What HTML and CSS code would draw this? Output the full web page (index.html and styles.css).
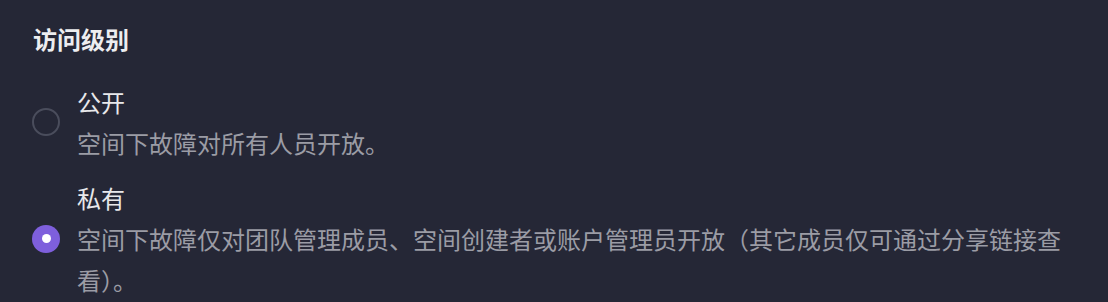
FILE: index.html
```html
<html>
    <head>
        <meta charset="utf-8">
        <link rel="stylesheet" href="styles.css">
    </head>
    <body>
        <div class="panel">
            <div class="title">访问级别</div>
            <div class="options">
                <label class="option">
                    <span class="radio"></span>
                    <span class="text">
                        <span class="label">公开</span>
                        <span class="desc">空间下故障对所有人员开放。</span>
                    </span>
                </label>
                <label class="option">
                    <span class="radio checked"></span>
                    <span class="text">
                        <span class="label">私有</span>
                        <span class="desc">空间下故障仅对团队管理成员、空间创建者或账户管理员开放（其它成员仅可通过分享链接查看）。</span>
                    </span>
                </label>
            </div>
        </div>
    </body>
</html>
```

FILE: styles.css
```css
body {
    margin: 0;
    background-color: rgb(37,39,54);
    font-family: "Noto Sans CJK SC", "Noto Sans", sans-serif;
}
.panel {
    padding: 18px 33px 0 33px;
}
.title {
    color: #ededf0;
    font-size: 24px;
    font-weight: 700;
    line-height: 41px;
}
.options {
    display: flex;
    flex-direction: column;
    gap: 14px;
    margin-top: 22px;
}
.option {
    display: flex;
    align-items: center;
    gap: 17px;
}
.radio {
    flex: none;
    box-sizing: border-box;
    width: 28px;
    height: 28px;
    margin-left: -1px;
    border-radius: 50%;
    border: 2px solid #4a4d5c;
}
.radio.checked {
    border: 0;
    background-color: #7e5fdc;
    display: flex;
    align-items: center;
    justify-content: center;
}
.radio.checked::after {
    content: "";
    width: 9px;
    height: 9px;
    border-radius: 50%;
    background-color: white;
}
.text {
    display: flex;
    flex-direction: column;
    font-size: 24px;
    line-height: 41px;
}
.label {
    color: #e8e8eb;
}
.desc {
    color: #9b9ca5;
}
```
